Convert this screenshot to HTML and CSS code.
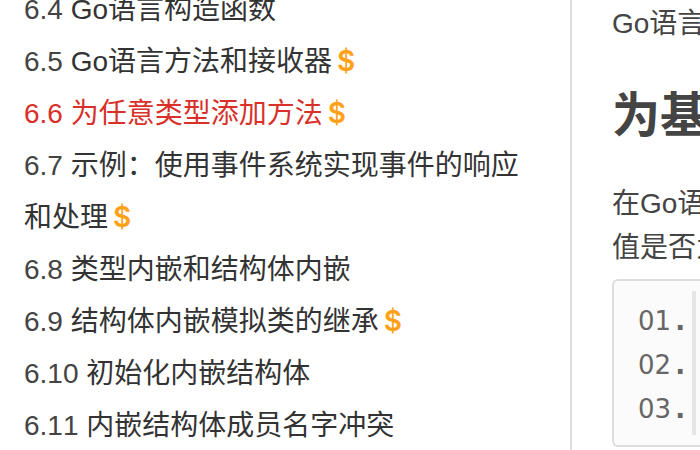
FILE: index.html
```html
<!DOCTYPE html>
<html lang="zh-CN">
<head>
<meta charset="utf-8">
<title>Go语言</title>
<link rel="stylesheet" href="styles.css">
</head>
<body>
<div class="page">
  <nav class="sidebar">
    <ul class="chapters">
      <li>6.4 <a href="#">Go语言构造函数</a></li>
      <li>6.5 <a href="#">Go语言方法和接收器</a><span class="paid">$</span></li>
      <li class="current">6.6 <a href="#">为任意类型添加方法</a><span class="paid">$</span></li>
      <li>6.7 <a href="#">示例：使用事件系统实现事件的响应和处理</a><span class="paid">$</span></li>
      <li>6.8 <a href="#">类型内嵌和结构体内嵌</a></li>
      <li>6.9 <a href="#">结构体内嵌模拟类的继承</a><span class="paid">$</span></li>
      <li>6.10 <a href="#">初始化内嵌结构体</a></li>
      <li>6.11 <a href="#">内嵌结构体成员名字冲突</a></li>
    </ul>
  </nav>
  <main class="article">
    <p>Go语言</p>
    <h2>为基</h2>
    <p>在Go语言<br>值是否为</p>
    <div class="code">
      <ol class="lines">
        <li>01<span class="dot">.</span></li>
        <li>02<span class="dot">.</span></li>
        <li>03<span class="dot">.</span></li>
      </ol>
    </div>
  </main>
</div>
</body>
</html>
```
FILE: styles.css
```css
* {
  box-sizing: border-box;
}

body {
  margin: 0;
  overflow: hidden;
  background: #fff;
  color: #444;
  font-family: "Liberation Sans", "Noto Sans CJK SC", sans-serif;
  font-size: 28px;
  font-kerning: none;
}

.page {
  display: flex;
  height: 100vh;
  overflow: hidden;
}

.sidebar {
  flex: 0 0 572px;
  padding: 0 28px 0 24px;
  border-right: 2px solid #ddd;
}

.chapters {
  margin: -16px 0 0;
  padding: 0;
  list-style: none;
  line-height: 52px;
}

.chapters a {
  color: #333;
  text-decoration: none;
}

.chapters .current,
.chapters .current a {
  color: #d9302a;
}

.chapters .paid {
  margin-left: 5px;
  color: #ffa116;
  font-family: Inter, sans-serif;
  font-size: 28px;
  font-weight: 600;
  line-height: 1;
}

.article {
  flex: 1;
  min-width: 0;
  padding: 2px 0 0 40px;
  line-height: 44px;
  white-space: nowrap;
}

.article p {
  margin: 0;
}

.article h2 {
  margin: 40px 0 36px;
  font-size: 48px;
  line-height: 60px;
}

.code {
  margin-top: 9px;
  padding: 10px 0;
  border: 2px solid #ddd;
  border-right: 0;
  border-radius: 6px 0 0 6px;
  background: #fbfbfb;
}

.lines {
  width: 82px;
  margin: 0;
  padding: 8px 0 4px 24px;
  border-right: 4px solid #e5e5e5;
  list-style: none;
  color: #666;
  font-family: "DejaVu Sans", sans-serif;
  font-size: 26px;
}

.dot {
  display: inline-block;
  width: 1ch;
  font-weight: bold;
  text-align: center;
}
```
